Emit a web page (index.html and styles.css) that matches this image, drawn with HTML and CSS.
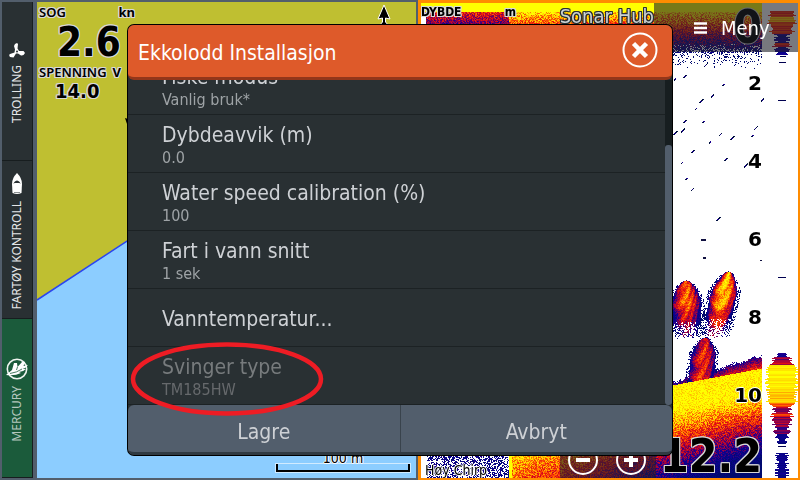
FILE: index.html
```html
<!DOCTYPE html>
<html lang="no">
<head>
  <meta charset="UTF-8" />
  <meta name="viewport" content="width=device-width, initial-scale=1.0"/>
  <title>Ekkolodd Installasjon</title>
  <link rel="stylesheet" href="styles.css">
</head>
<body>

  <!-- Side bar -->
  <nav class="sidebar">
    <button class="tab">
      <svg width="16" height="16" viewBox="0 0 16 16"><path fill="#fff" d="M6 6.500 L5 3 Q5.500 .5 8 0 L9 1 L8.500 5.500 L10 8 L14.500 8 L16 10 Q14.500 13 12 12.500 L9 10.500 L7 10.500 L4.500 14.500 L1 14 Q-.5 12 1 11 L5.500 9.500 Z"/><circle cx="8" cy="8.500" r="1" fill="#293033"/></svg>
      <span>TROLLING</span>
    </button>
    <button class="tab">
      <svg width="12" height="22" viewBox="0 0 12 22"><path fill="#fff" d="M6 0 Q11 5 11 11 L10.500 20 Q6 22 1.500 20 L1 11 Q1 5 6 0Z"/><path d="M2.500 11 Q3 8 6 7.500 Q9 8 9.500 11 L8.500 10 L3.500 10Z" fill="#293033"/><path d="M3 19.500 H9" stroke="#8d9294" fill="none"/></svg>
      <span>FARTØY KONTROLL</span>
    </button>
    <button class="tab mercury">
      <svg width="24" height="22" viewBox="0 0 24 22"><circle cx="12" cy="11" r="9.700" fill="none" stroke="#eef3ef" stroke-width="1.600"/><path fill="#fff" d="M1 17 L7 12 L9 5 L12 5 L12.500 9 L17 4 L20 4 L18.500 8 L23 7 Q21 10 17.500 11 L21 11 Q18 14 14 14 L16 15 Q10 18 1 17Z"/><path d="M5 15.500 Q12 14.500 17 11 M12.500 9 L11.500 12" stroke="#1b5b3b" stroke-width=".8" fill="none"/></svg>
      <span>MERCURY</span>
    </button>
  </nav>

  <!-- Chart -->
  <section class="chart">
    <svg class="chart-map" viewBox="0 0 379 476" preserveAspectRatio="none">
      <rect width="379" height="476" fill="#8ccdff"/>
      <path d="M0 0 H379 V50 L0 298Z" fill="#bfbf31"/>
      <path d="M0 298 L379 50" stroke="#2a45f0" stroke-width="1.500" fill="none"/>
      <path d="M88 116 L94 118 V124 L90 122Z" fill="#000"/>
    </svg>
    <div class="readouts">
      <div class="label"><span>SOG</span><span class="unit">kn</span></div>
      <div class="speed">2.6</div>
      <div class="label volt"><span>SPENNING</span><span class="unit">V</span></div>
      <div class="volts">14.0</div>
    </div>
    <svg class="north" width="16" height="24" viewBox="0 0 16 24"><path d="M8 1 L14 15 L9.500 14 V18 L13 22 V24 H3 V22 L6.500 18 V14 L2 15Z" fill="#000" stroke="#fff"/></svg>
    <div class="scale-bar">100 m</div>
  </section>

  <!-- Sonar -->
  <section class="sonar">
    <canvas id="sonarCanvas" width="377" height="475"></canvas>
    <div class="depth-label"><span>DYBDE</span><span>m</span></div>
    <div class="source">Sonar Hub</div>
    <div class="surface">0</div>
    <ol class="depths">
      <li>2</li>
      <li>4</li>
      <li>6</li>
      <li>8</li>
      <li>10</li>
    </ol>
    <button class="menu">
      <svg width="13" height="12" viewBox="0 0 13 12"><path d="M0 1.500 H13 M0 6 H13 M0 10.500 H13" stroke="#fff" stroke-width="2.500"/></svg>
      Meny
    </button>
    <div class="frequency">Høy Chirp</div>
    <div class="zoom">
      <button aria-label="Zoom ut"><svg width="30" height="30" viewBox="0 0 30 30"><circle cx="15" cy="15" r="14" fill="none" stroke="#fff" stroke-width="2"/><path d="M8 15 H22" stroke="#fff" stroke-width="4"/></svg></button>
      <button aria-label="Zoom inn"><svg width="30" height="30" viewBox="0 0 30 30"><circle cx="15" cy="15" r="14" fill="none" stroke="#fff" stroke-width="2"/><path d="M8 15 H22 M15 8 V22" stroke="#fff" stroke-width="4"/></svg></button>
    </div>
    <div class="depth-now">12.2</div>
  </section>

  <!-- Settings dialog -->
  <div class="overlay">
    <div class="dialog" role="dialog" aria-labelledby="dialogTitle">
      <header class="dialog-head">
        <h1 id="dialogTitle">Ekkolodd Installasjon</h1>
        <button class="close" aria-label="Lukk">
          <svg width="36" height="36" viewBox="0 0 36 36"><circle cx="18" cy="18" r="16.500" fill="none" stroke="#fff" stroke-width="2"/><path d="M11.500 11.500 L24.500 24.500 M24.500 11.500 L11.500 24.500" stroke="#fff" stroke-width="4.500"/></svg>
        </button>
      </header>
      <div class="dialog-body">
        <ul class="settings">
          <li><button>Fiske modus<small>Vanlig bruk*</small></button></li>
          <li><button>Dybdeavvik (m)<small>0.0</small></button></li>
          <li><button>Water speed calibration (%)<small>100</small></button></li>
          <li><button>Fart i vann snitt<small>1 sek</small></button></li>
          <li><button>Vanntemperatur...</button></li>
          <li><button disabled>Svinger type<small>TM185HW</small></button></li>
        </ul>
        <div class="scroll"><div class="thumb"></div></div>
      </div>
      <footer class="dialog-foot">
        <button>Lagre</button>
        <button>Avbryt</button>
      </footer>
      <svg class="ring" width="196" height="76" viewBox="0 0 196 76"><ellipse cx="98" cy="38" rx="94" ry="34.500" fill="none" stroke="#ee1c24" stroke-width="4.500"/></svg>
    </div>
  </div>

  <script src="sonar.js"></script>
</body>
</html>
```
FILE: styles.css
```css
* {
  box-sizing: border-box;
}
body {
  margin: 0;
  height: 100vh;
  display: grid;
  grid-template-columns: 37px 381fr 382fr;
  overflow: hidden;
  position: relative;
  background-color: #525e6c;
  color: #000;
  font-family: 'DejaVu Sans Condensed', 'DejaVu Sans', Tahoma, sans-serif;
}
button {
  border: none;
  padding: 0;
  background: none;
  color: inherit;
  font: inherit;
  cursor: pointer;
}
svg {
  display: block;
}

/* Side bar */
.sidebar {
  display: flex;
  flex-direction: column;
  padding: 2px 4px 2px 2px;
}
.tab {
  flex: 1;
  display: flex;
  flex-direction: column;
  align-items: center;
  justify-content: center;
  gap: 6px;
  padding-top: 4px;
  background-color: #293033;
  color: #e4e6e8;
  font-family: 'Noto Sans', sans-serif;
  font-size: 12px;
  border-right: 1px solid #171d1f;
  border-bottom: 1px solid #171d1f;
}
.tab span {
  writing-mode: vertical-rl;
  transform: rotate(180deg);
  line-height: 16px;
}
.mercury {
  background-color: #1b5b3b;
  color: #b4c6bc;
}

/* Chart */
.chart {
  position: relative;
  margin: 2px 2px 2px 0;
  overflow: hidden;
}
.chart-map {
  width: 100%;
  height: 100%;
}
.readouts {
  position: absolute;
  top: 2px;
  left: 2px;
  width: 96px;
}
.readouts,
.depth-label,
.depth-now {
  font-weight: bold;
  text-shadow: 1px 0 #d8d8d8, -1px 0 #d8d8d8, 0 1px #d8d8d8, 0 -1px #d8d8d8,
    1px 1px #d8d8d8, -1px -1px #d8d8d8, 1px -1px #d8d8d8, -1px 1px #d8d8d8;
}
.label {
  display: flex;
  justify-content: space-between;
  font-family: 'Noto Sans', sans-serif;
  font-size: 13px;
  font-weight: 600;
  line-height: 16px;
}
.unit {
  font-weight: bold;
}
.speed {
  font-size: 40px;
  line-height: 44px;
  padding-left: 18px;
}
.volt {
  width: 75px;
  gap: 6px;
}
.volts {
  font-size: 20px;
  line-height: 22px;
  padding-left: 16px;
}
.north {
  position: absolute;
  top: 2px;
  right: 24px;
}
.scale-bar {
  position: absolute;
  right: 6px;
  bottom: 6px;
  width: 134px;
  height: 22px;
  font-size: 14px;
  line-height: 16px;
  text-align: center;
  text-shadow: 1px 0 #fff, -1px 0 #fff, 0 1px #fff, 0 -1px #fff;
}
.scale-bar::after {
  content: "";
  position: absolute;
  left: 0;
  right: 0;
  bottom: 0;
  height: 6px;
  border: 2px solid #000;
  border-top: none;
  outline: 1px solid rgba(255, 255, 255, 0.6);
}

/* Sonar */
.sonar {
  position: relative;
  border: 2px solid #ff8c00;
  border-width: 3px 2px 2px 3px;
  overflow: hidden;
}
.sonar canvas {
  display: block;
  width: 100%;
  height: 100%;
}
.depth-label {
  position: absolute;
  top: 1px;
  left: 0;
  width: 95px;
  display: flex;
  justify-content: space-between;
  font-size: 12px;
  line-height: 16px;
}
.source {
  position: absolute;
  top: 2px;
  right: 144px;
  color: #ccd2d4;
  font-size: 20px;
  line-height: 22px;
  text-shadow: 1px 0 #293033, -1px 0 #293033, 0 1px #293033, 0 -1px #293033,
    1px 1px #293033, -1px -1px #293033, 1px -1px #293033, -1px 1px #293033;
}
.surface {
  position: absolute;
  top: 0;
  right: 36px;
  font-size: 46px;
  font-weight: bold;
  line-height: 48px;
  text-shadow: 1px 0 #d8d8d8, -1px 0 #d8d8d8, 0 1px #d8d8d8, 0 -1px #d8d8d8;
}
.depths {
  position: absolute;
  top: 41px;
  right: 36px;
  margin: 0;
  padding: 0;
  list-style: none;
  font-family: 'DejaVu Sans', sans-serif;
  font-size: 20px;
  font-weight: bold;
  line-height: 78px;
  text-align: right;
  text-shadow: 1px 0 #fff, -1px 0 #fff, 0 1px #fff, 0 -1px #fff;
}
.menu {
  position: absolute;
  top: 0;
  right: 0;
  width: 144px;
  height: 49px;
  display: flex;
  align-items: center;
  gap: 14px;
  padding-left: 40px;
  background-color: rgba(30, 32, 40, 0.6);
  color: #fff;
  font-size: 20px;
}
.frequency {
  position: absolute;
  left: 4px;
  bottom: 0;
  font-size: 14px;
  line-height: 16px;
  text-shadow: 1px 0 #fff, -1px 0 #fff, 0 1px #fff, 0 -1px #fff;
}
.zoom {
  position: absolute;
  right: 142px;
  bottom: 0;
  display: flex;
  gap: 18px;
  padding: 10px 10px 3px 8px;
  background-color: rgba(30, 32, 40, 0.6);
}
.depth-now {
  position: absolute;
  right: 36px;
  bottom: 0;
  font-size: 46px;
  line-height: 44px;
}

/* Settings dialog */
.overlay {
  position: absolute;
  inset: 0;
  display: flex;
  align-items: center;
  justify-content: center;
}
.dialog {
  position: relative;
  width: 68%;
  border-radius: 6px;
  background-color: #293033;
  color: #ced1d5;
  box-shadow: 0 0 0 1px #000;
}
.dialog-head {
  display: flex;
  align-items: center;
  justify-content: space-between;
  height: 55px;
  padding: 0 14px 2px 10px;
  border-bottom: 3px solid #93361a;
  border-radius: 6px;
  background-color: #de5a2a;
  color: #fff;
}
.dialog-head h1 {
  margin: 0;
  padding-top: 6px;
  font-size: 21px;
  font-weight: normal;
}
.dialog-body {
  display: flex;
  height: 325px;
}
.settings {
  flex: 1;
  display: flex;
  flex-direction: column;
  justify-content: flex-end;
  margin: 0;
  padding: 0;
  list-style: none;
  overflow: hidden;
}
.settings li {
  flex: none;
  height: 58px;
  border-bottom: 1px solid #1c2224;
}
.settings button {
  width: 100%;
  height: 100%;
  padding: 3px 0 0 34px;
  font-size: 21px;
  line-height: 26px;
  text-align: left;
}
.settings small {
  display: block;
  color: #9ea3a6;
  font-size: 16px;
  line-height: 20px;
}
.settings button:disabled {
  color: #777b7d;
}
.settings button:disabled small {
  color: #66696c;
}
.scroll {
  display: flex;
  flex-direction: column;
  justify-content: flex-end;
  width: 7px;
  background-color: #171e20;
}
.thumb {
  height: 80%;
  border-radius: 3px;
  background-color: #525e6c;
}
.dialog-foot {
  display: flex;
  height: 50px;
  border-bottom: 3px solid #303a42;
  border-radius: 6px;
  background-color: #525e6c;
}
.dialog-foot button {
  flex: 1;
  padding-top: 6px;
  font-size: 21px;
}
.dialog-foot button + button {
  border-left: 1px solid #39434c;
}
.ring {
  position: absolute;
  left: 1px;
  bottom: 38px;
  pointer-events: none;
}
```
FILE: sonar.js
```js
const canvas = document.getElementById('sonarCanvas');
const ctx = canvas.getContext('2d');
const W = canvas.width;
const H = canvas.height;
const SCOPE_X = 341;

// Repeatable random numbers
let seed = 7;
function rnd() {
  seed = (seed * 1664525 + 1013904223) % 4294967296;
  return seed / 4294967296;
}

// Echo strength to colour, weak to strong
const stops = [
  [0, 0, 10, 110], [0.25, 15, 0, 150], [0.4, 125, 0, 85], [0.55, 225, 10, 20],
  [0.7, 255, 85, 0], [0.85, 255, 205, 0], [1, 255, 255, 0]
];
function echoColor(v) {
  v = Math.max(0, Math.min(1, v));
  let i = 1;
  while (v > stops[i][0]) {
    if (i === stops.length - 1) break;
    i++;
  }
  const a = stops[i - 1];
  const b = stops[i];
  const t = Math.max(0, (v - a[0]) / (b[0] - a[0]));
  const c = [1, 2, 3].map(k => Math.round(a[k] + (b[k] - a[k]) * t));
  return `rgb(${c[0]}, ${c[1]}, ${c[2]})`;
}

// Fish arches: top point, height, half width, lean
const fish = [
  { x: 265, y: 277, h: 58, w: 15, lean: 0, v: 0.72 },
  { x: 307, y: 268, h: 66, w: 14, lean: -14, v: 0.86 },
  { x: 284, y: 334, h: 54, w: 13, lean: -6, v: 0.6 }
];
function fishEcho(x, y) {
  for (const f of fish) {
    const t = (y - f.y) / f.h;
    if (t < 0 || t > 1) continue;
    const half = f.w * Math.min(1, Math.sqrt(t * 3.2));
    const d = Math.abs(x - f.x - f.lean * t) / half;
    if (d > 1.2 || (d > 0.95 && rnd() < 0.6)) continue;
    if (f.h > 55 && t > 0.72 && rnd() < (t - 0.65) * 2.4) continue;
    const streak = Math.sin((x - f.x) * 0.8 + (x - f.x) * (x - f.x) * 0.04 + y * 0.35) * 0.08;
    const fade = f.h > 55 ? Math.max(0, t - 0.4) * 0.7 : 0;
    return f.v * (1 - d * d * 0.8) - fade + streak + (rnd() - 0.5) * 0.2;
  }
  return null;
}

function waterfall(x, y) {
  // older picture to the left of the seam
  if (x < 88 && y > 400) {
    return x > 5 && rnd() < 0.5 ? rnd() * 0.3 : null;
  }
  if (x < 91 && y > 400) return 1;
  if (x < 5 && y > 10) return null;
  if (y < 9) return 1;
  if (y < 50) {
    if (y > 40 && rnd() < (y - 40) / 20) return null;
    const start = x < 88 ? 0.6 : 0.9;
    return start - (y - 9) * 0.02 + (rnd() - 0.5) * 0.35;
  }
  if (y < 66 && x > 250) {
    return rnd() < 0.22 * (1 - (y - 50) / 16) ? 0 : null;
  }
  const edge = 379 - (x - 251) * 0.3 + Math.sin(x * 0.3);
  const ground = 382 - (x - 251) * 0.19;
  if (y > ground) {
    return 0.98 - Math.max(0, y - ground - 24) * (0.012 + (x - 251) * 0.00003) + (rnd() - 0.5) * 0.32;
  }
  const f = fishEcho(x, y);
  if (f !== null) return f;
  if (y > edge + rnd() * 4 - 2) return 0.15 + (y - edge) * 0.03 + rnd() * 0.2;
  return null;
}

ctx.fillStyle = '#fff';
ctx.fillRect(0, 0, W, H);
for (let y = 0; y < H; y++) {
  for (let x = 0; x < SCOPE_X; x++) {
    const v = waterfall(x, y);
    if (v === null) continue;
    ctx.fillStyle = echoColor(v);
    ctx.fillRect(x, y, 1, 1);
  }
}

// Small scattered echoes in open water
const specks = [
  [253, 76], [262, 74], [283, 63], [301, 82], [290, 93], [278, 99], [274, 106],
  [262, 119], [260, 128], [281, 119], [298, 132], [309, 136], [288, 139], [270, 149],
  [333, 126], [330, 133], [340, 97], [252, 131], [260, 160], [303, 157], [323, 163],
  [264, 176], [270, 187], [295, 217]
];
specks.forEach((s, i) => {
  for (let k = 0; k < 2 + i % 3; k++) {
    ctx.fillStyle = k === 1 ? '#1a0090' : '#001040';
    ctx.fillRect(s[0] + k, s[1] - k, 1 + i % 2, i % 4 === 0 ? 2 : 1);
  }
});
ctx.fillStyle = '#101040';
ctx.fillRect(280, 236, 5, 2);
ctx.fillRect(282, 254, 3, 2);
ctx.fillRect(339, 257, 2, 1);

// Live echo column: from, to, half width, strength
const bands = [
  [8, 14, 12, 0.6], [14, 19, 12, 0.78], [19, 23, 13, 0.68], [23, 31, 11, 0.58],
  [31, 40, 6, 0.2], [40, 44, 9, 0.55], [44, 52, 6, 0.2],
  [350, 354, 6, 0.2], [354, 358, 8, 0.42], [358, 362, 10, 0.5], [362, 384, 15, 0.95],
  [384, 400, 14, 0.86], [400, 404, 11, 0.68], [404, 411, 8, 0.42], [411, 414, 10, 0.6],
  [414, 424, 8, 0.44], [424, 431, 7, 0.35], [431, 441, 5, 0.15], [450, 475, 5, 0.18]
];
bands.forEach(b => {
  for (let y = b[0]; y < b[1]; y++) {
    const half = b[2] + Math.round((rnd() - 0.5) * 5);
    ctx.fillStyle = echoColor(b[3] + (rnd() - 0.5) * 0.16);
    ctx.fillRect(361 - half, y, half * 2, 1);
  }
});
ctx.fillStyle = '#000050';
ctx.fillRect(359, 53, 6, 1);
ctx.fillRect(358, 59, 7, 1);
ctx.fillRect(357, 97, 8, 1);
ctx.fillRect(357, 274, 8, 1);
ctx.fillRect(357, 443, 8, 1);
```
